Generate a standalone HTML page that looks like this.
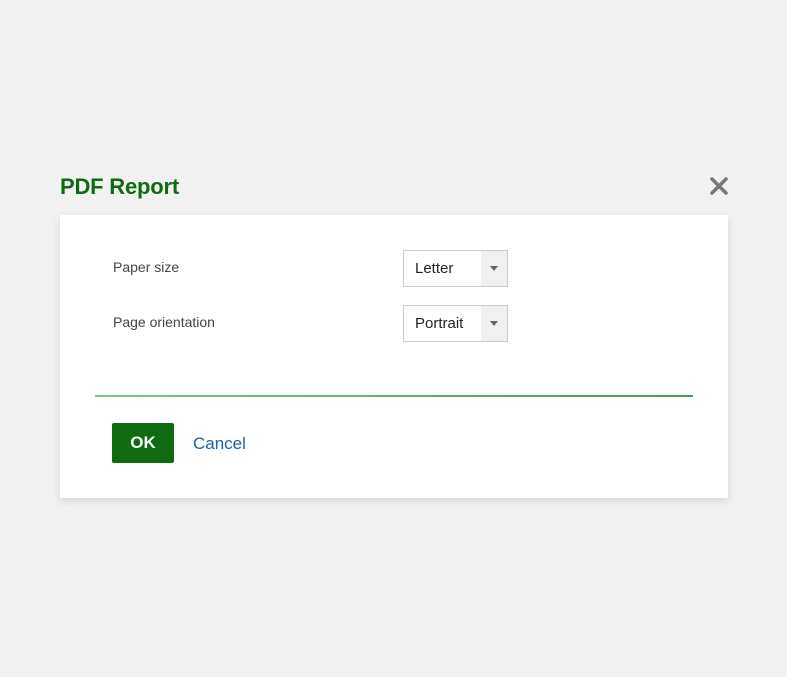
<!DOCTYPE html>
<html><head><style>
body{margin:0;width:787px;height:677px;background:#f2f2f2;font-family:"Liberation Sans",sans-serif;position:relative;overflow:hidden}
.title{position:absolute;left:60px;top:174px;font-size:22px;font-weight:bold;color:#106b10;letter-spacing:-0.2px}
.x{position:absolute;left:709px;top:176px;width:20px;height:20px}
.card{position:absolute;left:60px;top:215px;width:668px;height:283px;background:#fff;box-shadow:0 3px 8px rgba(0,0,0,0.12)}
.lbl{position:absolute;left:113px;font-size:14px;color:#444}
.sel{position:absolute;left:403px;width:103px;height:35px;border:1px solid #ccc;background:#fff;box-sizing:content-box}
.sel span{position:absolute;left:11px;top:9px;font-size:15px;color:#222}
.sel i{position:absolute;right:0;top:0;width:26px;height:35px;background:#f0f0f0}
.sel i:after{content:"";position:absolute;left:9px;top:15px;border-left:4px solid transparent;border-right:4px solid transparent;border-top:5px solid #666}
.line{position:absolute;left:95px;top:395px;width:598px;height:2px;background:linear-gradient(90deg,#7cc97c,#4f9a4f)}
.ok{position:absolute;left:112px;top:423px;width:62px;height:40px;background:#0e6b10;border-radius:2px;color:#fff;font-weight:bold;font-size:17px;text-align:center;line-height:40px}
.cancel{position:absolute;left:193px;top:434px;font-size:17px;color:#1a65a8}
</style></head><body>
<div class="title">PDF Report</div>
<svg class="x" viewBox="0 0 20 20"><path d="M3 3L17 17M17 3L3 17" stroke="#777" stroke-width="3.5" stroke-linecap="round"/></svg>
<div class="card"></div>
<div class="lbl" style="top:259px">Paper size</div>
<div class="lbl" style="top:314px">Page orientation</div>
<div class="sel" style="top:250px"><span>Letter</span><i></i></div>
<div class="sel" style="top:305px"><span>Portrait</span><i></i></div>
<div class="line"></div>
<div class="ok">OK</div>
<div class="cancel">Cancel</div>
</body></html>
